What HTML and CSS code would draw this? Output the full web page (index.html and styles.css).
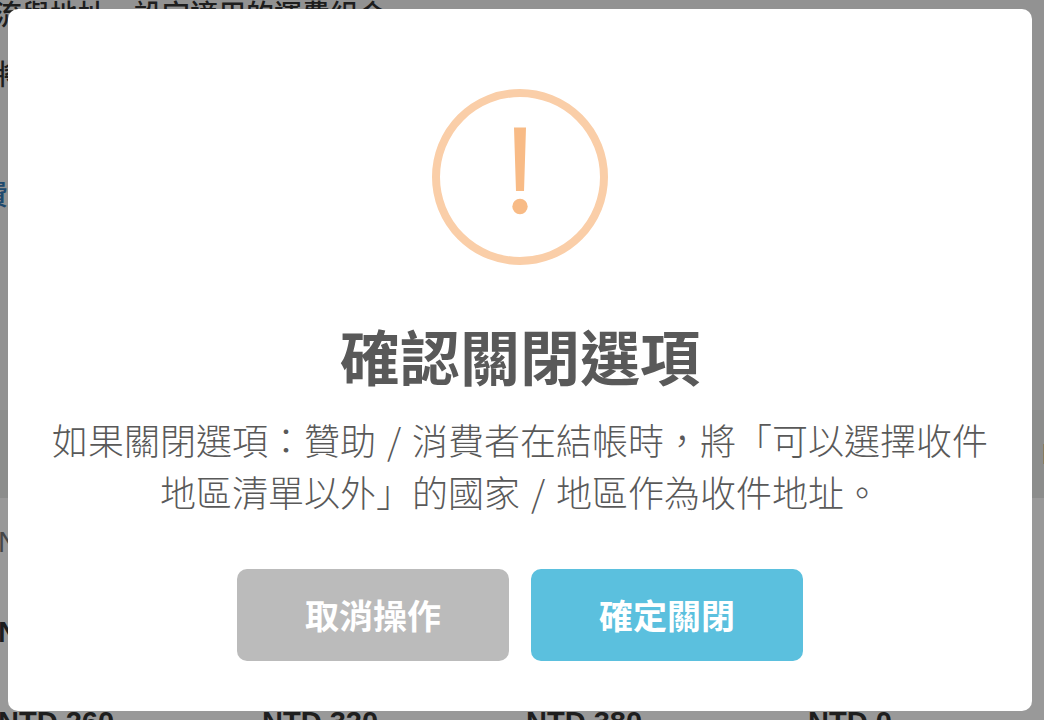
FILE: index.html
```html
<!DOCTYPE html>
<html lang="zh-Hant">
<head>
  <meta charset="UTF-8" />
  <meta name="viewport" content="width=device-width, initial-scale=1" />
  <title>確認關閉選項</title>
  <link rel="stylesheet" href="styles.css">
</head>
<body>
  <main class="page">
    <section class="intro">
      <p>流與地址，設定適用的運費組合</p>
      <p>將</p>
      <a class="intro-link" href="#">運費</a>
    </section>

    <table class="rates">
      <colgroup>
        <col class="col-first">
        <col class="col-second">
        <col class="col-third">
        <col class="col-fourth">
        <col>
      </colgroup>
      <thead>
        <tr>
          <th></th>
          <th></th>
          <th></th>
          <th></th>
          <th>N</th>
        </tr>
      </thead>
      <tbody>
        <tr class="rate-note">
          <td colspan="5">N</td>
        </tr>
        <tr class="rate-name">
          <td colspan="5">N</td>
        </tr>
        <tr class="rate-price">
          <td>NTD 260</td>
          <td>NTD 320</td>
          <td>NTD 380</td>
          <td>NTD 0</td>
          <td></td>
        </tr>
      </tbody>
    </table>
  </main>

  <div class="overlay">
    <div class="modal" role="dialog" aria-modal="true" aria-labelledby="modal-title" aria-describedby="modal-text">
      <svg class="icon-warning" viewBox="0 0 176 176" aria-hidden="true">
        <circle cx="88" cy="88" r="84" fill="none" stroke="#facea8" stroke-width="8" />
        <path d="M82 38.5H94L92 102H84Z" fill="#f8bb86" />
        <circle cx="88" cy="117.5" r="7.7" fill="#f8bb86" />
      </svg>
      <h2 id="modal-title" class="modal-title">確認關閉選項</h2>
      <p id="modal-text" class="modal-text">如果關閉選項：贊助<span class="slash">/</span>消費者在結帳時，將「可以選擇收件地區清單以外」的國家<span class="slash">/</span>地區作為收件地址。</p>
      <div class="modal-actions">
        <button type="button" class="btn btn-cancel">取消操作</button>
        <button type="button" class="btn btn-confirm">確定關閉</button>
      </div>
    </div>
  </div>
</body>
</html>
```

FILE: styles.css
```css
* {
  box-sizing: border-box;
}

body {
  margin: 0;
  font-family: "Noto Sans CJK TC", sans-serif;
  font-size: 28px;
  color: #333;
  background: #fff;
}

/* Page under the dialog */
.page {
  height: 100vh;
  overflow: hidden;
}

.intro {
  height: 410px;
  padding-left: 22px;
  background: #f3f3f3;
  font-weight: 500;
}

.intro p {
  height: 40px;
  margin: 0 0 20px -28px;
  line-height: 26px;
}

.intro-link {
  display: block;
  margin: 60px 0 0 -70px;
  padding-top: 20px;
  line-height: 26px;
  color: #337ab7;
  text-decoration: none;
}

.rates {
  width: 1400px;
  margin-left: -2px;
  border-collapse: collapse;
  table-layout: fixed;
  font-family: "Liberation Sans", "Noto Sans CJK TC", sans-serif;
  font-size: 29px;
  line-height: 32px;
}

.col-first,
.col-second {
  width: 264px;
}

.col-third {
  width: 282px;
}

.col-fourth {
  width: 234px;
}

.rates th {
  height: 88px;
  padding: 0;
  background: #e9ecea;
  text-align: left;
}

.rates td {
  height: 90px;
  padding: 0 0 2px;
  vertical-align: middle;
}

.rate-note td {
  color: #777;
}

.rate-name td,
.rate-price td {
  font-weight: bold;
}

/* Dialog */
.overlay {
  position: fixed;
  inset: 0;
  display: flex;
  align-items: center;
  justify-content: center;
  padding: 8px 12px 8px 8px;
  background: rgba(0, 0, 0, 0.4);
}

.modal {
  display: flex;
  flex-direction: column;
  align-items: center;
  width: 100%;
  max-width: 1024px;
  padding: 80px 40px 50px;
  border-radius: 10px;
  background: #fff;
  color: #595959;
  text-align: center;
}

.icon-warning {
  width: 176px;
  height: 176px;
}

.modal-title {
  margin: 60px 0 28px;
  font-size: 60px;
  font-weight: 700;
  line-height: 60px;
}

.modal-text {
  margin: 0 0 52px;
  font-size: 36px;
  font-weight: 300;
  line-height: 52px;
}

.slash {
  display: inline-block;
  width: 36px;
}

.modal-actions {
  display: flex;
  flex-wrap: wrap;
  justify-content: center;
  gap: 22px;
}

.btn {
  min-width: 272px;
  padding: 20px 64px;
  border: 0;
  border-radius: 10px;
  font-family: inherit;
  font-size: 34px;
  font-weight: 700;
  line-height: 52px;
  color: #fff;
  cursor: pointer;
}

.btn-cancel {
  background: #bbb;
}

.btn-confirm {
  background: #5bc0de;
}
```
